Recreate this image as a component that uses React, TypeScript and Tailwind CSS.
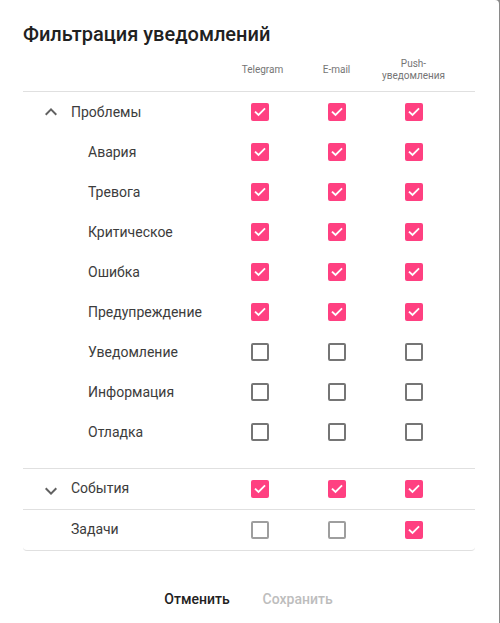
import React, { useState } from 'react';

type Channels = [boolean, boolean, boolean];

interface Row {
  id: string;
  label: string;
  values: Channels;
}

const problemRows: Row[] = [
  { id: 'crash', label: 'Авария', values: [true, true, true] },
  { id: 'alarm', label: 'Тревога', values: [true, true, true] },
  { id: 'critical', label: 'Критическое', values: [true, true, true] },
  { id: 'error', label: 'Ошибка', values: [true, true, true] },
  { id: 'warning', label: 'Предупреждение', values: [true, true, true] },
  { id: 'notice', label: 'Уведомление', values: [false, false, false] },
  { id: 'info', label: 'Информация', values: [false, false, false] },
  { id: 'debug', label: 'Отладка', values: [false, false, false] },
];

const Checkbox: React.FC<{ checked: boolean; onChange: () => void; muted?: boolean }> = ({ checked, onChange, muted }) => (
  <button
    onClick={onChange}
    className={`w-[18px] h-[18px] rounded-[2px] flex items-center justify-center ${
      checked ? 'bg-[#ff4081]' : muted ? 'border-2 border-[#9e9e9e] bg-white' : 'border-2 border-[#757575] bg-white'
    }`}
  >
    {checked && (
      <svg width="14" height="14" viewBox="0 0 14 14" fill="none">
        <path d="M2.6 7.2l2.9 2.8L11.4 4" stroke="white" strokeWidth="1.8" strokeLinecap="square" />
      </svg>
    )}
  </button>
);

const Chevron: React.FC<{ up: boolean }> = ({ up }) => (
  <svg width="24" height="24" viewBox="0 0 24 24" className={up ? '' : 'mt-[5px]'} fill="#616161">
    {up ? (
      <path d="M12 8l-6 6 1.41 1.41L12 10.83l4.59 4.58L18 14z" />
    ) : (
      <path d="M16.59 8.59L12 13.17 7.41 8.59 6 10l6 6 6-6z" />
    )}
  </svg>
);

const App: React.FC = () => {
  const [problems, setProblems] = useState<Row[]>(problemRows);
  const [problemsGroup, setProblemsGroup] = useState<Channels>([true, true, true]);
  const [events, setEvents] = useState<Channels>([true, true, true]);
  const [tasks, setTasks] = useState<Channels>([false, false, true]);

  const flip = (arr: Channels, i: number): Channels => arr.map((v, k) => (k === i ? !v : v)) as Channels;

  const toggleProblem = (id: string, i: number) => {
    setProblems(prev => prev.map(r => (r.id === id ? { ...r, values: flip(r.values, i) } : r)));
  };

  const cells = (values: Channels, onToggle: (i: number) => void, muted = false) =>
    values.map((v, i) => (
      <div key={i} className="flex items-center justify-center">
        <Checkbox checked={v} muted={muted} onChange={() => onToggle(i)} />
      </div>
    ));

  return (
    <div className="w-[500px] h-[623px] bg-[#8a8a8a] overflow-hidden" style={{ fontFamily: 'Roboto, "Noto Sans", sans-serif' }}>
      <div className="w-[499px] h-[623px] bg-white rounded-tr-[4px] px-[23px] pr-[24px] flex flex-col">
        <h2 className="pt-[20px] text-[20px] leading-[28px] font-medium text-[#212121]">Фильтрация уведомлений</h2>

        <div className="grid grid-cols-[198px_77px_77px_77px] h-[44px] items-center border-b border-[#e0e0e0] text-[10px] leading-[12px] text-[#757575] text-center">
          <div />
          <div className="pl-[6px]">Telegram</div>
          <div>E-mail</div>
          <div>
            Push-
            <br />
            уведомления
          </div>
        </div>

        <div className="pb-[16px] border-b border-[#e0e0e0]">
          <div className="grid grid-cols-[198px_77px_77px_77px] h-[40px] items-center text-sm text-[#3c3c3c]">
            <div className="flex items-center pl-[16px]">
              <Chevron up />
              <span className="ml-[8px]">Проблемы</span>
            </div>
            {cells(problemsGroup, i => setProblemsGroup(flip(problemsGroup, i)))}
          </div>
          {problems.map(r => (
            <div key={r.id} className="grid grid-cols-[198px_77px_77px_77px] h-[40px] items-center text-sm text-[#3c3c3c]">
              <div className="pl-[65px]">{r.label}</div>
              {cells(r.values, i => toggleProblem(r.id, i))}
            </div>
          ))}
        </div>

        <div className="grid grid-cols-[198px_77px_77px_77px] h-[41px] items-center border-b border-[#e0e0e0] text-sm text-[#3c3c3c]">
          <div className="flex items-center pl-[16px] -mt-[2px]">
            <Chevron up={false} />
            <span className="ml-[8px]">События</span>
          </div>
          {cells(events, i => setEvents(flip(events, i)))}
        </div>

        <div className="grid grid-cols-[198px_77px_77px_77px] h-[41px] items-center border-b border-[#e0e0e0] rounded-b-[4px] text-sm text-[#3c3c3c]">
          <div className="pl-[48px] -mt-[2px]">Задачи</div>
          {cells(tasks, i => setTasks(flip(tasks, i)), true)}
        </div>

        <div className="flex justify-center gap-[17px] mt-[30px] pr-[1px]">
          <button className="h-[36px] min-w-[64px] px-[8px] text-sm font-medium text-[#212121]">Отменить</button>
          <button disabled className="h-[36px] min-w-[64px] px-[8px] text-sm font-medium text-[#bdbdbd]">
            Сохранить
          </button>
        </div>
      </div>
    </div>
  );
};

export default App;
